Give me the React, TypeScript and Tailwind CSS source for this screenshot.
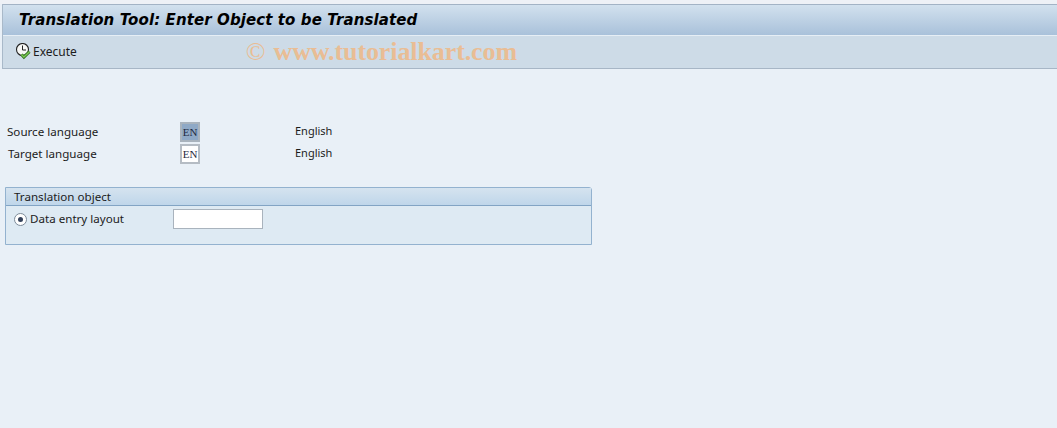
export default function App() {
  return (
    <div className="h-[428px] w-[1057px] overflow-hidden bg-[#e9f0f7] font-['Noto_Sans',sans-serif] text-[11.6px] text-[#1c1c1c]">
      <div className="h-[4px] bg-[#eef1f6]" />
      <div className="ml-[2px] border-l border-l-[#a9b9c9]">
        <div className="flex h-[32px] items-center border-t border-t-[#a3b3c5] border-b border-b-[#e6eef5] bg-gradient-to-b from-[#d2e1ee] to-[#a9c1da] pl-[16px]">
          <h1 className="font-['DejaVu_Sans',sans-serif] text-[15px] font-bold italic tracking-[0.1px] text-black">
            Translation Tool: Enter Object to be Translated
          </h1>
        </div>
        <div className="flex h-[33px] items-center border-b border-b-[#a7b6c6] bg-[#cddbe7] pl-[12px]">
          <svg width="18" height="18" viewBox="0 0 18 18" className="shrink-0">
            <circle cx="7.5" cy="6.5" r="6" fill="#f7f8f6" stroke="#222" strokeWidth="1.1" />
            <path d="M7.5 2.5V7H11" fill="none" stroke="#222" strokeWidth="1" />
            <path d="M6.5 11.5l2.4 2.6 5.6-5.4" fill="none" stroke="#2f6f1c" strokeWidth="3" />
            <path d="M6.5 11.5l2.4 2.6 5.6-5.4" fill="none" stroke="#7ccb55" strokeWidth="1.4" />
          </svg>
          <span className="text-[12px]">Execute</span>
          <span className="ml-[169px] flex items-center gap-[8px] font-['Liberation_Serif',serif] text-[26px] leading-none font-bold tracking-[-0.1px] text-[#e9bd94]">
            <span className="font-normal">©</span>
            <span>www.tutorialkart.com</span>
          </span>
        </div>
      </div>

      <div className="mt-[52px] flex h-[22px] items-center pl-[7px]">
        <span className="w-[173px]">Source language</span>
        <span className="flex h-[20px] w-[20px] items-center justify-center border-2 border-[#a9b3bd] bg-[#8fa9c6] font-['Liberation_Serif',serif] text-[11px] text-[#1f2a40]">EN</span>
        <span className="mb-px ml-[95px] text-[11px]">English</span>
      </div>
      <div className="flex h-[22px] items-center pl-[8px]">
        <span className="w-[172px]">Target language</span>
        <span className="flex h-[20px] w-[20px] items-center justify-center border-2 border-[#b5bcc4] bg-white font-['Liberation_Serif',serif] text-[11px] text-[#1f2a40]">EN</span>
        <span className="mb-px ml-[95px] text-[11px]">English</span>
      </div>

      <section className="mt-[22px] ml-[5px] w-[587px] rounded-tr-[3px] border border-[#93b2cf] bg-[#deeaf3]">
        <div className="flex h-[18px] items-center border-b border-b-[#82a4c4] bg-gradient-to-b from-[#d5e3ef] to-[#bfd6ea] pl-[8px]">
          Translation object
        </div>
        <div className="flex h-[38px] pt-[3px] pl-[8px]">
          <span className="mt-[4px] flex h-[13px] w-[13px] items-center justify-center rounded-full border border-[#7d8b99] bg-white">
            <span className="h-[5px] w-[5px] rounded-full bg-[#33415a]" />
          </span>
          <span className="ml-[3px] w-[143px] leading-[20px]">Data entry layout</span>
          <span className="h-[20px] w-[90px] border border-[#a9b3bd] bg-white" />
        </div>
      </section>
    </div>
  );
}
